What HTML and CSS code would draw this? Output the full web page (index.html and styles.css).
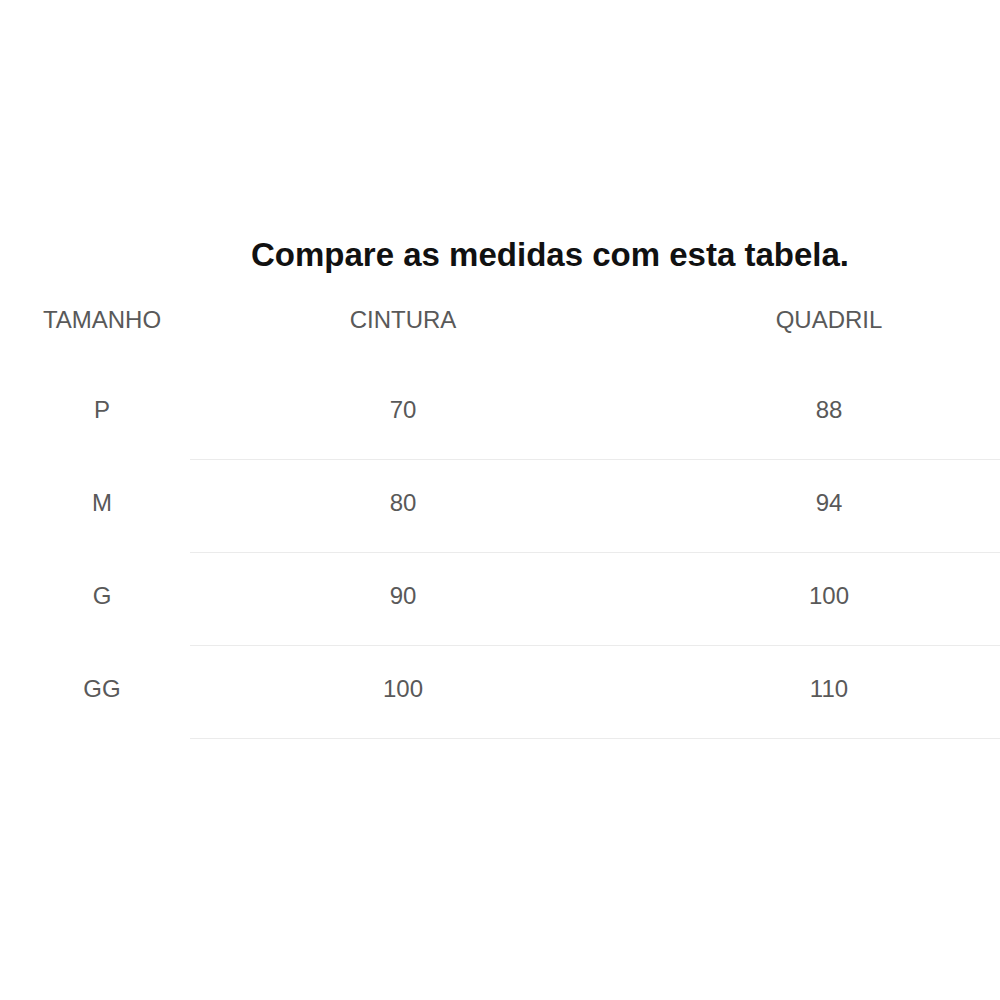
FILE: index.html
```
<!DOCTYPE html>
<html lang="pt">
<head>
<meta charset="utf-8">
<link rel="stylesheet" href="styles.css">
</head>
<body>
<main class="page">
  <h1 class="title">Compare as medidas com esta tabela.</h1>
  <div class="table">
    <div class="cell head first">TAMANHO</div>
    <div class="cell head">CINTURA</div>
    <div class="cell head">QUADRIL</div>

    <div class="cell first">P</div>
    <div class="cell row">70</div>
    <div class="cell row">88</div>

    <div class="cell first">M</div>
    <div class="cell row">80</div>
    <div class="cell row">94</div>

    <div class="cell first">G</div>
    <div class="cell row">90</div>
    <div class="cell row">100</div>

    <div class="cell first">GG</div>
    <div class="cell row">100</div>
    <div class="cell row">110</div>
  </div>
</main>
</body>
</html>
```
FILE: styles.css
```
html, body {
  margin: 0;
  padding: 0;
  background: #fff;
  overflow: hidden;
}
.page {
  width: 1000px;
  height: 1000px;
  overflow: hidden;
  font-family: "Liberation Sans", Arial, sans-serif;
}
.title {
  margin: 0;
  padding: 235px 0 0 100px;
  text-align: center;
  font-size: 33px;
  line-height: 40px;
  font-weight: bold;
  color: #111;
}
.table {
  margin-top: 33px;
  display: grid;
  grid-template-columns: 190px 426px 426px;
  width: 1042px;
}
.cell {
  text-align: center;
  font-size: 24px;
  line-height: 24px;
  color: #595959;
  padding: 31px 0 37px;
  border-bottom: 1px solid transparent;
}
.cell.first {
  padding-left: 14px;
}
.cell.head {
  padding: 0 0 34px;
}
.cell.head.first {
  padding-left: 14px;
}
.cell.row {
  border-bottom-color: #ebebeb;
}
```
